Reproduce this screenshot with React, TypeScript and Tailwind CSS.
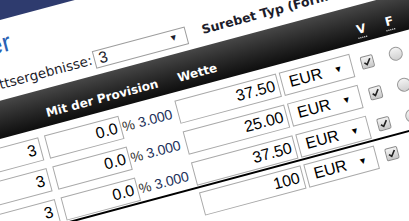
import React from 'react';

const rows = [
  { odds: '3', fee: '0.0', stake: '37.50' },
  { odds: '3', fee: '0.0', stake: '25.00' },
  { odds: '3', fee: '0.0', stake: '37.50' },
];

const box = 'h-[24px] border border-[#a9a9a9] bg-white text-[16px] leading-[22px] text-black font-["Liberation_Sans",Arial,sans-serif]';

function Tick() {
  return (
    <div className="w-[13px] h-[13px] rounded-[2px] border border-[#8c8c8c] bg-linear-to-b from-[#f4f4f4] to-[#c8c8c8] flex items-center justify-center">
      <svg viewBox="0 0 10 10" className="w-[9px] h-[9px]">
        <path d="M1.5 5.2 L4 7.8 L8.6 1.8" fill="none" stroke="#222" strokeWidth="1.8" />
      </svg>
    </div>
  );
}

function Radio() {
  return <div className="w-[14px] h-[14px] rounded-full border border-[#9a9a9a] bg-linear-to-b from-[#f4f4f4] to-[#d0d0d0]" />;
}

function Currency() {
  return (
    <div className={`${box} ml-[3px] w-[73px] flex items-center justify-between pl-[7px] pr-[9px]`}>
      <span>EUR</span>
      <span className="text-[9px] leading-none">▼</span>
    </div>
  );
}

export default function App() {
  return (
    <div className="w-[409px] h-[221px] overflow-hidden bg-white">
      <div className="origin-top-left rotate-[-15deg]">
        <div className="-ml-[289px] -mt-[40px] w-[730px] bg-white font-['DejaVu_Sans',Verdana,sans-serif] text-[#1d1d2b]">
          <div className="h-[58px] bg-[#2e3b6e]" />
          <div className="h-[47px] flex items-center">
            <h1 className="w-[278px] text-right text-[26px] text-[#2a62b4] font-['Liberation_Sans',Arial,sans-serif]">Surebet Rechner</h1>
          </div>
          <div className="h-[31px] flex items-center text-[12.5px]">
            <span className="w-[352px] text-right text-[13.5px]">Anzahl der Wettsergebnisse:</span>
            <div className="ml-[2px] w-[96px] h-[18px] border border-[#9d9d9d] bg-white flex items-center justify-between pl-[4px] pr-[8px] text-[16px] font-['Liberation_Sans',Arial,sans-serif]">
              <span>3</span>
              <span className="text-[9px]">▼</span>
            </div>
            <span className="ml-[16px] font-bold">Surebet Typ (Formel):</span>
          </div>

          <div className="ml-[200px]">
            <div className="h-[37px] pt-[10px] flex items-center bg-linear-to-b from-[#474747] to-[#0e0e0e] text-white font-bold text-[12px]">
              <span className="w-[94px]">Quote</span>
              <span className="w-[136px]">Mit der Provision</span>
              <span className="w-[180px]">Wette</span>
              <span className="w-[20px] text-center underline decoration-dotted underline-offset-4">V</span>
              <span className="ml-[9px] w-[20px] text-center underline decoration-dotted underline-offset-4">F</span>
            </div>

            <div className="pt-[8px] flex flex-col gap-[8px]">
              {rows.map((r, i) => (
                <div key={i} className="flex items-center">
                  <div className={`${box} w-[80px] text-right pr-[4px]`}>{r.odds}</div>
                  <div className={`${box} ml-[6px] w-[77px] text-right pr-[3px]`}>{r.fee}</div>
                  <div className="w-[58px] pl-[1px] text-[14px] font-['Liberation_Sans',Arial,sans-serif]">
                    <span className="text-[#333]">%</span> <span className="text-[#22305a]">3.000</span>
                  </div>
                  <div className={`${box} w-[105px] text-right pr-[3px]`}>{r.stake}</div>
                  <Currency />
                  <div className="ml-[9px]"><Tick /></div>
                  <div className="ml-[16px]"><Radio /></div>
                </div>
              ))}
            </div>

            <div className="mt-[1px] border-t-2 border-black pt-[4px] flex items-center">
              <div className={`${box} ml-[221px] w-[105px] text-right pr-[3px]`}>100</div>
              <Currency />
              <div className="ml-[9px]"><Tick /></div>
            </div>
          </div>
        </div>
      </div>
    </div>
  );
}
